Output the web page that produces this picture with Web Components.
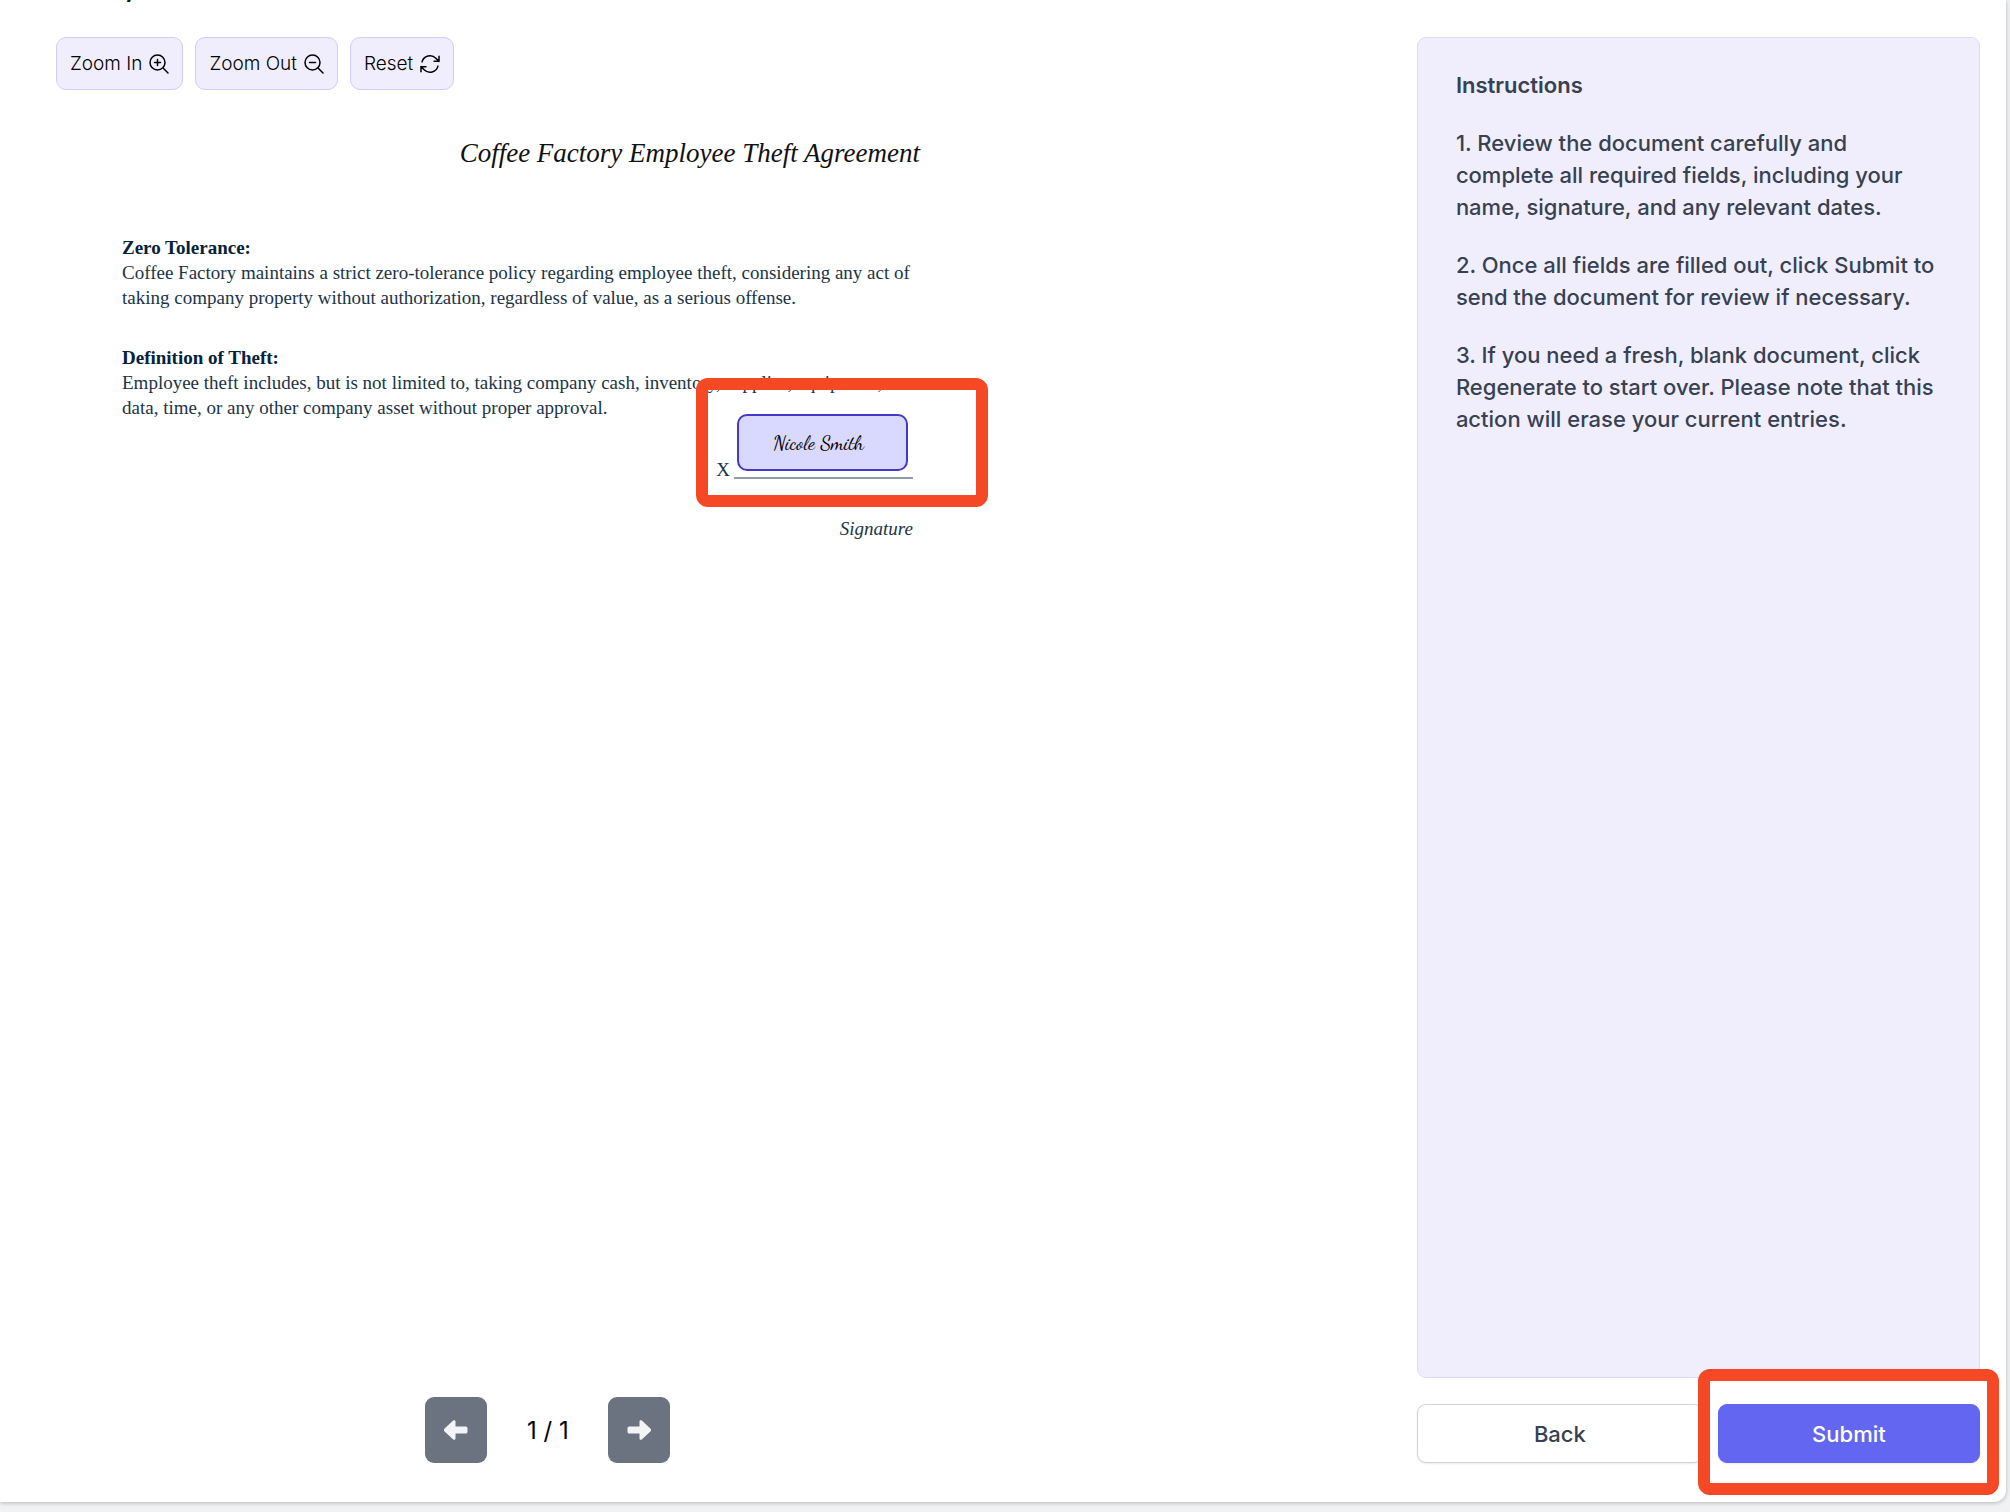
<!DOCTYPE html>
<html lang="en">
<head>
<meta charset="utf-8">
<title>Sign document</title>
<style>
    body {
        margin: 0;
        background-color: #f1f2f4;
        font-family: Inter, sans-serif;
        color: #374151;
    }
</style>
</head>
<body>

<sign-card>
    <span slot="heading">y</span>
    <tool-button slot="tools" icon="zoom-in">Zoom In</tool-button>
    <tool-button slot="tools" icon="zoom-out">Zoom Out</tool-button>
    <tool-button slot="tools" icon="reset">Reset</tool-button>

    <paper-document slot="document">
        <span slot="title">Coffee Factory Employee Theft Agreement</span>
        <paper-clause>
            <span slot="term">Zero Tolerance:</span>
            Coffee Factory maintains a strict zero-tolerance policy regarding employee theft, considering any act of taking company property without authorization, regardless of value, as a serious offense.
        </paper-clause>
        <paper-clause>
            <span slot="term">Definition of Theft:</span>
            Employee theft includes, but is not limited to, taking company cash, inventory, supplies, equipment, data, time, or any other company asset without proper approval.
        </paper-clause>
        <signature-field slot="signature" label="Signature">Nicole Smith</signature-field>
    </paper-document>

    <page-nav slot="pager" page="1" total="1"></page-nav>

    <instructions-panel slot="side">
        <span slot="title">Instructions</span>
        <p>1. Review the document carefully and complete all required fields, including your name, signature, and any relevant dates.</p>
        <p>2. Once all fields are filled out, click Submit to send the document for review if necessary.</p>
        <p>3. If you need a fresh, blank document, click Regenerate to start over. Please note that this action will erase your current entries.</p>
    </instructions-panel>
    <form-actions slot="side"></form-actions>
</sign-card>

<template id="signCard">
    <style>
        :host {
            display: block;
            padding-bottom: 10px;
        }
        .card {
            box-sizing: border-box;
            min-height: calc(100vh - 10px);
            margin-right: 4px;
            padding: 0 26px 39px 56px;
            display: flex;
            flex-direction: column;
            background-color: #fff;
            border-radius: 0 0 12px 0;
            box-shadow: 0 1px 4px rgba(0, 0, 0, .25);
        }
        /* the heading is scrolled out of view, only its last row is left */
        h1 {
            display: flex;
            align-items: flex-end;
            height: 2px;
            margin: 0 0 35px;
            padding-left: 66px;
            overflow: hidden;
            font-size: 24px;
            line-height: 20px;
            font-weight: 600;
            color: #111827;
        }
        .columns {
            flex: 1;
            display: grid;
            grid-template-columns: minmax(0, 29fr) minmax(0, 12fr);
        }
        .main, .side {
            display: flex;
            flex-direction: column;
        }
        .tools {
            display: flex;
            gap: 12px;
        }
        .pager {
            width: 72%;
            margin-top: auto;
            padding-left: 2px;
        }
        .side {
            gap: 26px;
        }
    </style>
    <div class="card">
        <h1><slot name="heading"></slot></h1>
        <div class="columns">
            <div class="main">
                <div class="tools"><slot name="tools"></slot></div>
                <slot name="document"></slot>
                <div class="pager"><slot name="pager"></slot></div>
            </div>
            <div class="side"><slot name="side"></slot></div>
        </div>
    </div>
</template>

<template id="toolButton">
    <style>
        :host {
            display: block;
        }
        button {
            display: flex;
            align-items: center;
            gap: 5px;
            height: 53px;
            padding: 0 11px 0 13px;
            border: 1px solid #d0cdfc;
            border-radius: 10px;
            background-color: #f0eefd;
            font: 300 19px Inter, sans-serif;
            color: #000;
            cursor: pointer;
        }
        svg {
            width: 24px;
            height: 24px;
            fill: none;
            stroke: currentColor;
            stroke-width: 1.5;
            stroke-linecap: round;
            stroke-linejoin: round;
        }
    </style>
    <button type="button"><slot></slot><svg viewBox="0 0 24 24" aria-hidden="true"><path/></svg></button>
</template>

<template id="paperDocument">
    <style>
        :host {
            display: block;
            max-width: 866px;
            padding-top: 45px;
            font-family: "Liberation Serif", serif;
            color: #1b3448;
        }
        h2 {
            margin: 0 0 64px;
            padding-right: 2px;
            font-size: 27px;
            line-height: 36px;
            font-weight: 400;
            font-style: italic;
            text-align: right;
            color: #111;
        }
        .body {
            padding: 0 9px 0 66px;
            display: flex;
            flex-direction: column;
            gap: 35px;
        }
    </style>
    <h2><slot name="title"></slot></h2>
    <div class="body"><slot></slot></div>
    <slot name="signature"></slot>
</template>

<template id="paperClause">
    <style>
        :host {
            display: block;
            font-size: 19px;
            line-height: 25px;
        }
        h3 {
            margin: 0;
            font-size: inherit;
            color: #06233b;
        }
        p {
            margin: 0;
        }
    </style>
    <h3><slot name="term"></slot></h3>
    <p><slot></slot></p>
</template>

<template id="signatureField">
    <style>
        :host {
            display: flex;
            flex-direction: column;
            align-items: flex-end;
            padding-right: 9px;
            font-size: 19px;
            line-height: 24px;
        }
        .row {
            position: relative;
            display: flex;
            align-items: flex-end;
            gap: 4px;
            height: 59px;
            margin-bottom: 38px;
        }
        .row span {
            line-height: 18px;
        }
        .line {
            width: 179px;
            box-sizing: border-box;
            padding: 0 5px 6px 3px;
            border-bottom: 2px solid #919ca7;
        }
        button {
            display: block;
            width: 100%;
            height: 57px;
            padding: 0 8px 0 0;
            border: 2px solid #4338ca;
            border-radius: 10px;
            background-color: #d9d8fe;
            font: 400 20px "Dancing Script", "Liberation Serif", serif;
            color: #000;
            cursor: pointer;
        }
        label {
            font-style: italic;
        }
    </style>
    <div class="row">
        <span>X</span>
        <div class="line"><button type="button" id="sign"><slot></slot></button></div>
        <focus-frame style="inset: -42px -75px -28px -20px"></focus-frame>
    </div>
    <label for="sign"></label>
</template>

<template id="focusFrame">
    <style>
        :host {
            position: absolute;
            border-radius: 12px;
            border: 12px solid #f54825;
            pointer-events: none;
        }
    </style>
</template>

<template id="pageNav">
    <style>
        :host {
            display: flex;
            align-items: center;
            justify-content: center;
            color: #000;
            font-size: 24px;
        }
        span {
            width: 121px;
            text-align: center;
        }
        button {
            display: grid;
            place-items: center;
            width: 62px;
            height: 66px;
            padding: 0;
            border: 0;
            border-radius: 9px;
            background-color: #6b7280;
            color: #f3f4f6;
            cursor: pointer;
        }
        svg {
            width: 24px;
            height: 20px;
            fill: currentColor;
        }
    </style>
    <button type="button" aria-label="Previous page">
        <svg viewBox="0 0 24 20"><path d="M.6 8.6 9.2.6c.9-.9 2.3-.3 2.3.9v5h10.2c1 0 1.8.8 1.8 1.8v3.4c0 1-.8 1.800-1.800 1.800H11.500v5c0 1.200-1.400 1.800-2.300.9L.6 11.400a2 2 0 0 1 0-2.800z"/></svg>
    </button>
    <span></span>
    <button type="button" aria-label="Next page">
        <svg viewBox="0 0 24 20"><path d="M23.4 8.6 14.8.6c-.9-.9-2.3-.3-2.3.9v5H2.3C1.3 6.5.5 7.300.5 8.300v3.400c0 1 .8 1.800 1.800 1.800h10.200v5c0 1.200 1.400 1.800 2.300.9l8.600-8a2 2 0 0 0 0-2.800z"/></svg>
    </button>
</template>

<template id="instructionsPanel">
    <style>
        :host {
            flex: 1;
            display: flex;
            flex-direction: column;
            gap: 26px;
            padding: 31px 38px;
            border: 1px solid #dddbfd;
            border-radius: 9px;
            background-color: #f0eefd;
            font-size: 22px;
            line-height: 32px;
            font-weight: 500;
        }
        h2 {
            margin: 0;
            font-size: inherit;
            font-weight: 600;
        }
        ::slotted(p) {
            margin: 0;
        }
    </style>
    <h2><slot name="title"></slot></h2>
    <slot></slot>
</template>

<template id="formActions">
    <style>
        :host {
            display: grid;
            grid-template-columns: 12fr 11fr;
            gap: 15px;
        }
        button {
            width: 100%;
            height: 59px;
            border: 1px solid #d1d5db;
            border-radius: 9px;
            background-color: #fff;
            box-shadow: 0 1px 2px rgba(0, 0, 0, .08);
            font: 500 22px Inter, sans-serif;
            color: #374151;
            cursor: pointer;
        }
        .submit {
            border-color: #6366f1;
            background-color: #6366f1;
            color: #fff;
        }
        div {
            position: relative;
        }
    </style>
    <button type="button">Back</button>
    <div>
        <button type="submit" class="submit">Submit</button>
        <focus-frame style="inset: -35px -19px -32px -20px"></focus-frame>
    </div>
</template>

<script>
    ((customElements, document) => {
        'use strict';
        const icons = {
            'zoom-in': 'M21 21l-5.197-5.197m0 0A7.5 7.5 0 1 0 5.196 5.196a7.5 7.5 0 0 0 10.607 10.607zM10.5 7.5v6m3-3h-6',
            'zoom-out': 'M21 21l-5.197-5.197m0 0A7.5 7.5 0 1 0 5.196 5.196a7.5 7.5 0 0 0 10.607 10.607zM13.5 10.5h-6',
            'reset': 'M16.023 9.348h4.992M2.985 19.644v-4.992h4.992m-4.993 0l3.181 3.183a8.25 8.25 0 0 0 13.803-3.7M4.031 9.865a8.25 8.25 0 0 1 13.803-3.7l3.181 3.182m0-4.991v4.99'
        };
        class TemplateElement extends HTMLElement {
            constructor(id) {
                super();
                const template = document.getElementById(id);
                this.attachShadow({mode: 'open'}).appendChild(document.importNode(template.content, true));
            }
        }
        customElements.define('focus-frame', class extends TemplateElement {
            constructor() { super('focusFrame'); }
        });
        customElements.define('sign-card', class extends TemplateElement {
            constructor() { super('signCard'); }
        });
        customElements.define('tool-button', class extends TemplateElement {
            constructor() { super('toolButton'); }
            connectedCallback() {
                this.shadowRoot.querySelector('path').setAttribute('d', icons[this.getAttribute('icon')]);
            }
        });
        customElements.define('paper-document', class extends TemplateElement {
            constructor() { super('paperDocument'); }
        });
        customElements.define('paper-clause', class extends TemplateElement {
            constructor() { super('paperClause'); }
        });
        customElements.define('signature-field', class extends TemplateElement {
            constructor() { super('signatureField'); }
            connectedCallback() {
                this.shadowRoot.querySelector('label').textContent = this.getAttribute('label');
            }
        });
        customElements.define('page-nav', class extends TemplateElement {
            constructor() { super('pageNav'); }
            connectedCallback() {
                const text = this.getAttribute('page') + ' / ' + this.getAttribute('total');
                this.shadowRoot.querySelector('span').textContent = text;
            }
        });
        customElements.define('instructions-panel', class extends TemplateElement {
            constructor() { super('instructionsPanel'); }
        });
        customElements.define('form-actions', class extends TemplateElement {
            constructor() { super('formActions'); }
        });
    })(window.customElements, document);
</script>
</body>
</html>
